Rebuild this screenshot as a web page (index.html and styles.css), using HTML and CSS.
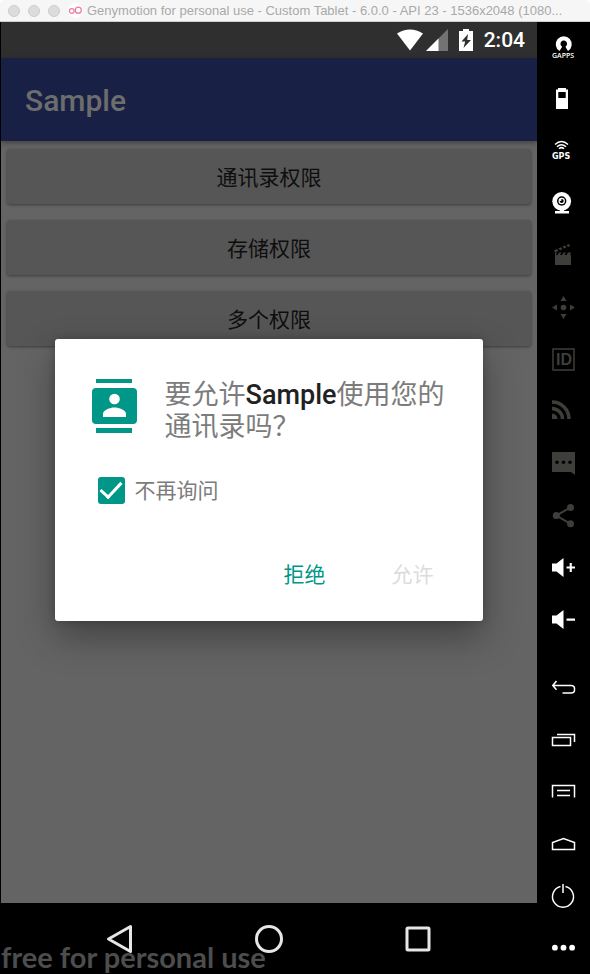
FILE: index.html
```html
<!DOCTYPE html>
<html lang="zh-CN">
<head>
<meta charset="utf-8">
<meta name="viewport" content="width=device-width, initial-scale=1">
<title>Genymotion</title>
<link rel="stylesheet" href="styles.css">
</head>
<body>
<div class="window">
  <header class="titlebar">
    <span class="light"></span><span class="light"></span><span class="light"></span>
    <svg class="logo" viewBox="0 0 16 16" aria-hidden="true"><circle cx="8" cy="8" r="8" fill="#fdfdfd"/><circle cx="4" cy="8.500" r="2.500"/><circle cx="11" cy="7.700" r="3.200"/></svg>
    <span class="caption">Genymotion for personal use - Custom Tablet - 6.0.0 - API 23 - 1536x2048 (1080...</span>
  </header>
  <div class="emulator">
    <main class="device">
      <div class="status">
        <svg class="wifi" viewBox="0 0 26 22" aria-hidden="true"><path d="M0 4.500Q13-3.500 26 4.500L13 21.500Z"/></svg>
        <svg class="signal" viewBox="0 0 22 22" aria-hidden="true"><path d="M22 0V22H0Z" opacity=".33"/><path d="M12.500 9.500V22H0Z"/></svg>
        <svg class="charge" viewBox="0 0 14 22" aria-hidden="true"><path fill-rule="evenodd" d="M4 0h6v2h4v20H0V2h4ZM9 5L2.500 12.500h3.700L4.500 19L12 11H8.200Z"/></svg>
        <time>2:04</time>
      </div>
      <div class="app">
        <div class="appbar"><h1>Sample</h1></div>
        <div class="content">
          <button class="raised">通讯录权限</button>
          <button class="raised">存储权限</button>
          <button class="raised">多个权限</button>
        </div>
        <div class="overlay">
          <div class="dialog" role="dialog" aria-labelledby="question">
            <div class="message">
              <svg class="contacts" viewBox="0 0 45 54" aria-hidden="true"><path fill="#009688" d="M4 0h36v4H4ZM4 49h36v5H4ZM4 9h37q4 0 4 4v28q0 4-4 4H4q-4 0-4-4V13q0-4 4-4Z"/><circle cx="22.500" cy="20" r="5.300" fill="#fff"/><path fill="#fff" d="M11 38v-3c0-4 7-6.500 11.500-6.500S34 31 34 35v3Z"/></svg>
              <p id="question">要允许<strong>Sample</strong>使用您的通讯录吗？</p>
            </div>
            <label class="again"><input type="checkbox" checked>不再询问</label>
            <div class="actions">
              <button class="flat">拒绝</button>
              <button class="flat" disabled>允许</button>
            </div>
          </div>
        </div>
      </div>
      <nav class="navbar">
        <button aria-label="Back"><svg viewBox="0 0 30 30"><path d="M25.500 2.500V27.500L3.500 15Z"/></svg></button>
        <button aria-label="Home"><svg viewBox="0 0 30 30"><circle cx="15" cy="15" r="12.500"/></svg></button>
        <button aria-label="Overview"><svg viewBox="0 0 30 30"><rect x="4" y="4" width="22" height="22" rx="1"/></svg></button>
        <span class="watermark">free for personal use</span>
      </nav>
    </main>
    <aside class="tools">
      <button aria-label="Open GApps"><svg viewBox="0 0 24 24"><path d="M7.500 15A8 8 0 1 1 16 15L13.300 10.800A3.300 3.300 0 1 0 10.200 10.800Z"/><path d="M10.500 9.500h2.500l1 6h-4.500Z" fill="#000"/><text class="gapps" x="0" y="21.500">GAPPS</text></svg></button>
      <button aria-label="Battery"><svg viewBox="0 0 24 24"><path fill-rule="evenodd" d="M6 0h8v1.500h2V21H4V1.500h2ZM6.300 4v6h7.400V4Z"/></svg></button>
      <button aria-label="GPS"><svg viewBox="0 0 24 24"><path class="line" d="M3 4.500Q9.500-1.500 16 4.500M5 6.800Q9.500 2.800 14 6.800M7 8.800Q9.500 6.500 12 8.800"/><text class="gps" x="0" y="18.500">GPS</text></svg></button>
      <button aria-label="Camera"><svg viewBox="0 0 24 24"><circle cx="9.700" cy="9.300" r="9.400"/><circle cx="9.700" cy="9" r="4.700" fill="#000"/><circle cx="9.700" cy="9" r="3.200"/><circle cx="9.700" cy="9" r="2" fill="#000"/><circle cx="8.500" cy="8" r="1"/><path d="M8 18h4v1h5v2.500H3V19h5Z"/></svg></button>
      <button class="off" aria-label="Screencast"><svg viewBox="0 0 24 24"><path d="M3 11h16v10H3ZM3 8.500h2L4 11H3ZM7 8.500h2.500L8 11H5.500ZM11.500 8.500H14L12.500 11H10ZM16 8.500h3V9L18 11h-3.500ZM2 6.200L5 5l1.500 2L3 8.200ZM6.500 4.300L9 3.300l1.500 2L8 6.300ZM10.500 2.600L13 1.600l1.500 2L12 4.600ZM14.500 1L17 0l1 2-2 1Z"/></svg></button>
      <button class="off" aria-label="Remote control"><svg viewBox="0 0 24 24"><circle cx="11.500" cy="11.500" r="2.800"/><path d="M11.500 0l3 5h-6ZM11.500 23l3-5h-6ZM0 11.500l5-3v6ZM23 11.500l-5-3v6Z"/></svg></button>
      <button class="off" aria-label="Identifiers"><svg viewBox="0 0 24 24"><rect x="1" y="1" width="21" height="21" fill="none" stroke="currentColor" stroke-width="1.500"/><text class="ident" x="4" y="17">ID</text></svg></button>
      <button class="off" aria-label="Network"><svg viewBox="0 0 24 24"><path d="M0 13.500A5.500 5.500 0 0 1 5.500 19H0Z"/><path d="M0 8.500A10.500 10.500 0 0 1 10.500 19M0 2A17 17 0 0 1 17 19" fill="none" stroke="currentColor" stroke-width="3.500"/></svg></button>
      <button class="off" aria-label="SMS"><svg viewBox="0 0 24 24"><path d="M0 0h23v23l-4-3H0Z"/><g fill="#000"><circle cx="5" cy="10.300" r="1.700"/><circle cx="11.500" cy="10.300" r="1.700"/><circle cx="18" cy="10.300" r="1.700"/></g></svg></button>
      <button class="off" aria-label="Share"><svg viewBox="0 0 24 24"><circle cx="18.500" cy="3.500" r="3.500"/><circle cx="18.500" cy="19.800" r="3.500"/><circle cx="4.300" cy="11.600" r="3.500"/><path d="M18.500 3.500L4.300 11.600l14.200 8.200" fill="none" stroke="currentColor" stroke-width="2"/></svg></button>
      <button aria-label="Volume up"><svg viewBox="0 0 24 24"><path d="M0 7.500h4.500L11.500 2v19L4.500 15.500H0ZM14.500 10.500h3.200V7h2.100v3.500H23v2.100h-3.200V16h-2.100v-3.400h-3.200Z"/></svg></button>
      <button aria-label="Volume down"><svg viewBox="0 0 24 24"><path d="M0 7.500h4.500L11.500 2v19L4.500 15.500H0ZM14.500 10.500H23v2.200h-8.500Z"/></svg></button>
      <button class="system" aria-label="Back"><svg viewBox="0 0 24 24"><path class="line" d="M4.500 5L.8 9.500l3.700 4.300M.8 9.500H19q3.500 0 3.500 3v1.500q0 3-3.500 3h-8.500"/></svg></button>
      <button aria-label="Recent apps"><svg viewBox="0 0 24 24"><path class="line" d="M5 6.500h17.500V14M.5 9.500h18v8H.5Z"/></svg></button>
      <button aria-label="Menu"><svg viewBox="0 0 24 24"><path class="line" d="M.5 17.500V5.500h22v12M5 10.500h13M5 15.500h13"/></svg></button>
      <button aria-label="Home"><svg viewBox="0 0 24 24"><path class="line" d="M.5 17.500V10.500L11.500 6.500l11 4v7Z"/></svg></button>
      <button aria-label="Power"><svg viewBox="0 0 24 24"><path class="line" d="M8.500 2.500A10.500 10.500 0 1 0 13.500 2.500M11 0v9"/></svg></button>
      <button aria-label="More"><svg viewBox="0 0 24 24"><circle cx="2.900" cy="11.700" r="2.900"/><circle cx="11.500" cy="11.700" r="2.900"/><circle cx="20.100" cy="11.700" r="2.900"/></svg></button>
    </aside>
  </div>
</div>
</body>
</html>
```
FILE: styles.css
```css
* {
  box-sizing: border-box;
}

body {
  margin: 0;
  background: #fff;
  font-family: Roboto, "Noto Sans CJK SC", sans-serif;
}

button {
  margin: 0;
  padding: 0;
  border: 0;
  background: none;
  font: inherit;
  color: inherit;
}

svg {
  display: block;
  fill: currentColor;
}

.window {
  display: flex;
  flex-direction: column;
  min-height: 100vh;
}

.titlebar {
  display: flex;
  align-items: center;
  height: 22px;
  padding: 0 8px;
  gap: 8px;
  border-bottom: 1px solid #cfcfcf;
  border-radius: 5px 5px 0 0;
  background: #f6f6f6;
  color: #a9a9a9;
  font-family: "Liberation Sans", sans-serif;
  font-size: 13px;
  white-space: nowrap;
}

.light {
  flex: none;
  width: 12px;
  height: 12px;
  border: 1px solid #cecece;
  border-radius: 50%;
  background: #dcdcdc;
}

.logo {
  flex: none;
  width: 15px;
  height: 15px;
  stroke: #e87fa2;
  stroke-width: 1.3px;
  fill: none;
}

.logo circle:first-child {
  stroke: none;
}

.caption {
  margin-left: -4px;
}

.emulator {
  display: flex;
  flex: 1;
  background: #000;
}

.device {
  display: flex;
  flex: 1;
  flex-direction: column;
  min-width: 0;
  margin-left: 1px;
}

.status {
  display: flex;
  align-items: center;
  justify-content: flex-end;
  height: 36px;
  padding-right: 12px;
  background: #2f2f2f;
  color: #fff;
  font-size: 21px;
  font-weight: 500;
}

.wifi {
  width: 26px;
  height: 22px;
  margin-right: 3px;
}

.signal {
  width: 22px;
  height: 22px;
  margin-right: 11px;
}

.charge {
  width: 14px;
  height: 22px;
  margin-right: 11px;
}

.app {
  position: relative;
  display: flex;
  flex: 1;
  flex-direction: column;
  background: #646464;
}

.appbar {
  display: flex;
  align-items: center;
  height: 83px;
  padding: 2px 24px 0;
  background: #192046;
  box-shadow: 0 2px 5px rgba(0, 0, 0, .35);
  color: #6d6d6d;
}

.appbar h1 {
  margin: 0;
  font-size: 30px;
  font-weight: 500;
}

.content {
  display: flex;
  flex-direction: column;
  gap: 16px;
  padding: 8px 6px;
}

.raised {
  height: 55px;
  padding-bottom: 2px;
  border-radius: 3px;
  background: #565656;
  box-shadow: 0 1px 3px rgba(0, 0, 0, .4);
  color: #0e0e0e;
  font-size: 21px;
}

.overlay {
  position: absolute;
  inset: 0;
  display: flex;
  align-items: center;
  justify-content: center;
  padding-bottom: 2px;
}

.dialog {
  width: 80%;
  padding: 40px 37px 24px;
  border-radius: 3px;
  background: #fff;
  box-shadow: 0 16px 36px rgba(0, 0, 0, .34), 0 0 8px rgba(0, 0, 0, .2);
  color: #7c7c7c;
  font-size: 21px;
}

.message {
  display: flex;
  gap: 28px;
}

.contacts {
  flex: none;
  width: 45px;
  height: 54px;
}

.message p {
  margin: 0;
  font-size: 27px;
  line-height: 32px;
}

.message strong {
  color: #212121;
  font-weight: 500;
}

.again {
  display: flex;
  align-items: center;
  gap: 10px;
  margin: 34px 6px 0;
  line-height: 28px;
}

.again input {
  display: flex;
  justify-content: center;
  appearance: none;
  width: 27px;
  height: 27px;
  margin: 0;
  border-radius: 3px;
  background: #009688;
}

.again input:checked::after {
  content: "";
  width: 9px;
  height: 18px;
  border: solid #fff;
  border-width: 0 3px 3px 0;
  transform: rotate(43deg);
}

.actions {
  display: flex;
  justify-content: flex-end;
  gap: 44px;
  margin-top: 44px;
  padding-right: 2px;
}

.flat {
  height: 48px;
  padding: 0 11px;
  color: #009688;
}

.flat:disabled {
  color: #dcdcdc;
}

.navbar {
  position: relative;
  display: flex;
  align-items: center;
  justify-content: center;
  gap: 119px;
  height: 71px;
  color: #e6e6e6;
}

.navbar svg {
  width: 30px;
  height: 30px;
  fill: none;
  stroke: currentColor;
  stroke-width: 3px;
  stroke-linejoin: round;
}

.navbar button {
  z-index: 1;
}

.watermark {
  position: absolute;
  left: 0;
  bottom: 1px;
  color: #4d4d4d;
  font-family: Lato, sans-serif;
  font-size: 29px;
  font-weight: 700;
  line-height: 32px;
}

.tools {
  display: flex;
  flex: none;
  flex-direction: column;
  width: 53px;
  color: #fff;
}

.tools button {
  height: 52px;
  padding: 14px 0 14px 15px;
}

.tools svg {
  width: 24px;
  height: 24px;
  overflow: visible;
}

.tools .system {
  margin-top: 16px;
}

.tools .off {
  color: #3e3e3a;
}

.line {
  fill: none;
  stroke: currentColor;
  stroke-width: 1.5px;
}

.gapps {
  font: 600 7px "Open Sans", sans-serif;
}

.gps {
  font: bold 8px "DejaVu Sans", sans-serif;
}

.ident {
  font: bold 16px "Liberation Sans", sans-serif;
}
```
